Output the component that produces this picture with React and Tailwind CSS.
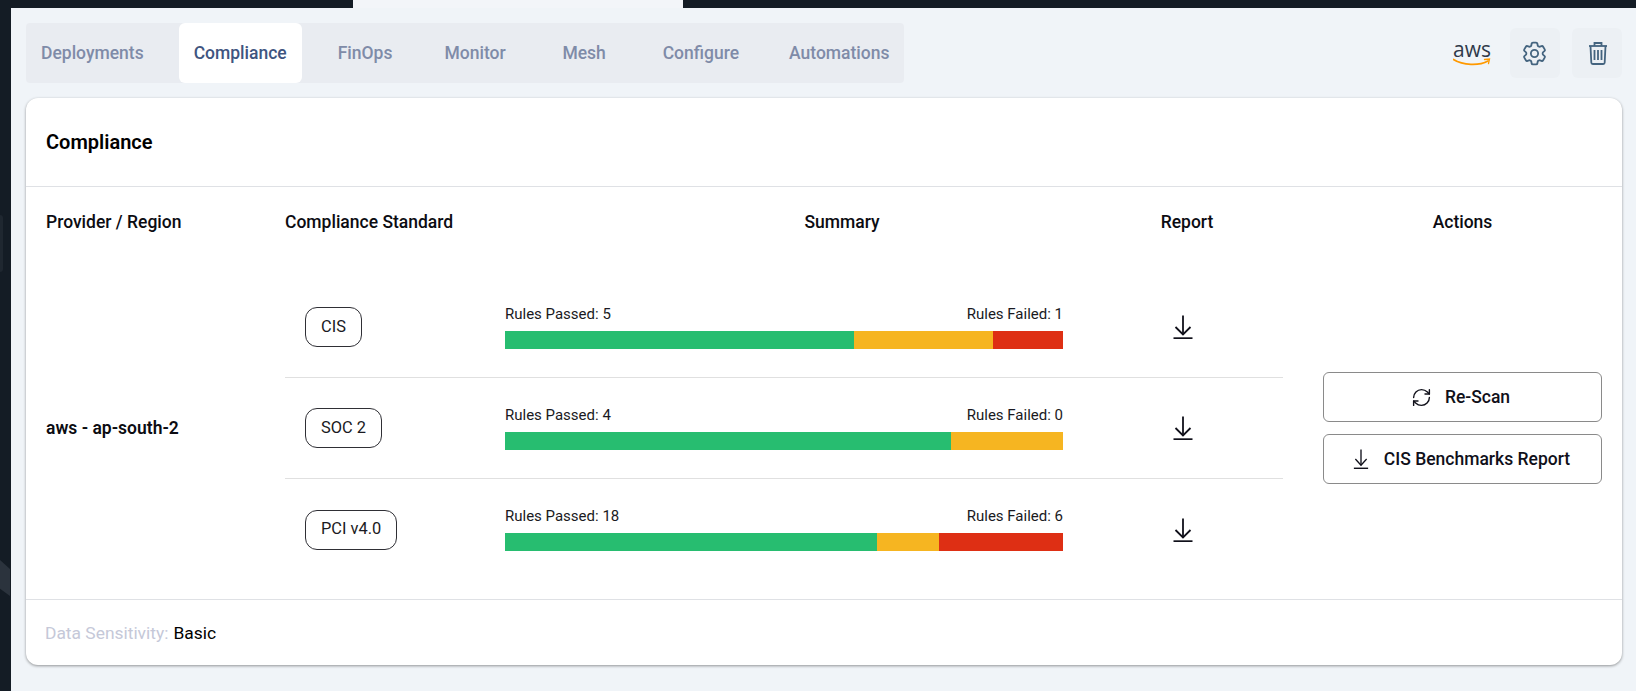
import React from 'react';
import { RefreshCw } from 'lucide-react';
import { HiOutlineCog6Tooth } from 'react-icons/hi2';

const tabs = ['Deployments', 'Compliance', 'FinOps', 'Monitor', 'Mesh', 'Configure', 'Automations'];

const standards = [
  { name: 'CIS', passed: 5, failed: 1, parts: ['62.5%', '25%', '12.5%'] },
  { name: 'SOC 2', passed: 4, failed: 0, parts: ['80%', '20%', '0%'] },
  { name: 'PCI v4.0', passed: 18, failed: 6, parts: ['66.67%', '11.11%', '22.22%'] },
];

const DownloadIcon = ({ className, stretch }) => (
  <svg
    viewBox="0 0 24 24"
    fill="none"
    stroke="currentColor"
    strokeWidth="1.8"
    preserveAspectRatio={stretch ? 'none' : undefined}
    className={className}
  >
    <path d="M12 0.500v19" />
    <path d="M4.500 12l7.500 7.500 7.500-7.500" />
    <path d="M2.500 23.200h19" />
  </svg>
);

const TrashIcon = () => (
  <svg viewBox="0 0 20 24" fill="none" stroke="#44647f" strokeWidth="1.8" className="w-[20px] h-[24px] ml-px">
    <path d="M1 5h18" />
    <path d="M6.500 5V2h7v3" />
    <path d="M2.500 5l.8 16.500c0 .9.7 1.500 1.500 1.500h10.400c.8 0 1.500-.6 1.500-1.500L17.500 5" />
    <path d="M6.500 9v10M10 9v10M13.500 9v10" />
  </svg>
);

const AwsLogo = () => (
  <div className="flex flex-col items-center w-[38px] mr-[19px]">
    <span className="text-[21px] leading-[20px] h-[20px] text-[#2f3a4a] [font-family:'Open_Sans',sans-serif]">aws</span>
    <svg viewBox="0 0 38 9" className="w-[38px] h-[9px] -mt-[1px]" fill="none">
      <path d="M0.500 1.500C10 7.500 26 8 35 3" stroke="#ff9900" strokeWidth="1.800" strokeLinecap="round" />
      <path d="M31.500 1.500l5-.5-1 4.500" stroke="#ff9900" strokeWidth="1.300" strokeLinecap="round" />
    </svg>
  </div>
);

const StandardRow = ({ item, last }) => (
  <div className={`flex items-center h-[101px] ${last ? '' : 'border-b border-[#e0e0e0]'}`}>
    <div className="w-[220px] pl-[20px]">
      <span className="inline-flex items-center h-[40px] px-[15px] border border-[#2f2f35] rounded-[12px] text-[16.400px] text-[#1a1a22]">
        {item.name}
      </span>
    </div>
    <div className="w-[558px] pb-[2px]">
      <div className="flex justify-between h-[20px] mb-[7px] text-[15px] leading-[20px] text-[#1a1a22]">
        <span>Rules Passed: {item.passed}</span>
        <span>Rules Failed: {item.failed}</span>
      </div>
      <div className="flex h-[18px]">
        <div className="bg-[#27bd70]" style={{ width: item.parts[0] }} />
        <div className="bg-[#f6b521]" style={{ width: item.parts[1] }} />
        <div className="bg-[#de2f14]" style={{ width: item.parts[2] }} />
      </div>
    </div>
    <div className="ml-[108px] text-[#10101a]">
      <DownloadIcon className="w-[24px] h-[24px]" />
    </div>
  </div>
);

const App = () => {
  return (
    <div className="relative flex flex-col h-[691px] overflow-hidden bg-[#141c25] [font-family:Roboto,sans-serif]">
      {/* top strip */}
      <div className="flex h-[8px] shrink-0">
        <div className="w-[353px]" />
        <div className="w-[330px] bg-[#f3f5f9]" />
      </div>

      {/* blurred bits of the page behind */}
      <div className="absolute left-0 top-[215px] w-[3px] h-[57px] bg-[#1f2730] rounded-r" />
      <div className="absolute left-0 top-[560px] w-[10px] h-[36px] bg-[#2b333d] [clip-path:polygon(0_0,100%_25%,100%_100%,0_80%)]" />

      <div className="flex flex-1 min-h-0 pl-[11px]">
        <div className="flex flex-col flex-1 bg-[#f0f4f8] pl-[15px] pr-[14px] pt-[15px]">
          {/* tabs + actions */}
          <div className="flex items-center justify-between h-[60px]">
            <div className="flex h-[60px] bg-[#e9ecf1] rounded-[4px] gap-[20px] text-[17.500px] font-medium">
              {tabs.map((tab, i) =>
                tab === 'Compliance' ? (
                  <div key={tab} className="flex items-center justify-center px-[15px] bg-white rounded-[6px] text-[#3f5580]">
                    {tab}
                  </div>
                ) : (
                  <div
                    key={tab}
                    className={`flex items-center justify-center min-w-[85px] text-[#7f8ba8] ${i === 0 ? 'px-[15px]' : 'px-[16px]'} ${tab === 'Automations' ? '-ml-[2px] pr-[15px]' : ''}`}
                  >
                    {tab}
                  </div>
                )
              )}
            </div>
            <div className="flex items-center">
              <AwsLogo />
              <div className="flex items-center justify-center w-[50px] h-[50px] bg-[#ecf0f4] rounded-[6px] mr-[12px]">
                <HiOutlineCog6Tooth size={29} color="#44647f" className="-ml-[2px]" />
              </div>
              <div className="flex items-center justify-center w-[50px] h-[50px] bg-[#ecf0f4] rounded-[6px]">
                <TrashIcon />
              </div>
            </div>
          </div>

          {/* card */}
          <div className="flex flex-col mt-[15px] h-[567px] bg-white rounded-[12px] shadow-[0_1px_3px_rgba(0,0,0,0.4)]">
            <div className="flex items-center h-[89px] px-[20px] border-b border-[#dfe1e5] text-[20px] font-semibold text-black">
              Compliance
            </div>

            <div className="flex items-start h-[90px] pt-[23px] px-[20px] text-[17.500px] leading-[24px] font-medium text-[#0c0c12]">
              <div className="w-[239px]">Provider / Region</div>
              <div className="w-[240px]">Compliance Standard</div>
              <div className="w-[634px] text-center">Summary</div>
              <div className="w-[56px] text-center">Report</div>
              <div className="ml-auto w-[279px] text-center">Actions</div>
            </div>

            <div className="flex items-start pl-[20px] pr-[20px] h-[322px]">
              <div className="w-[239px] mt-[139px] text-[17.500px] leading-[24px] font-semibold text-[#0c0c12]">
                aws - ap-south-2
              </div>
              <div className="w-[998px]">
                {standards.map((item, i) => (
                  <StandardRow key={item.name} item={item} last={i === standards.length - 1} />
                ))}
              </div>
              <div className="ml-auto w-[279px] mt-[95px] flex flex-col gap-[12px] text-[17.500px] font-medium text-[#10101a]">
                <button className="flex items-center justify-center gap-[13px] h-[50px] pr-[4px] border border-[#8a8a8a] rounded-[6px]">
                  <RefreshCw size={21} strokeWidth={1.6} />
                  Re-Scan
                </button>
                <button className="flex items-center justify-center gap-[14px] h-[50px] pr-[3px] border border-[#8a8a8a] rounded-[6px]">
                  <DownloadIcon stretch className="w-[18px] h-[20px]" />
                  CIS Benchmarks Report
                </button>
              </div>
            </div>

            <div className="flex items-center flex-1 pl-[19px] pr-[20px] pt-[1px] border-t border-[#dfe1e5] text-[17.400px]">
              <span className="text-[#c5c8d8]">Data Sensitivity:</span>
              <span className="ml-[5px] text-black">Basic</span>
            </div>
          </div>
        </div>
      </div>
    </div>
  );
};

export default App;
